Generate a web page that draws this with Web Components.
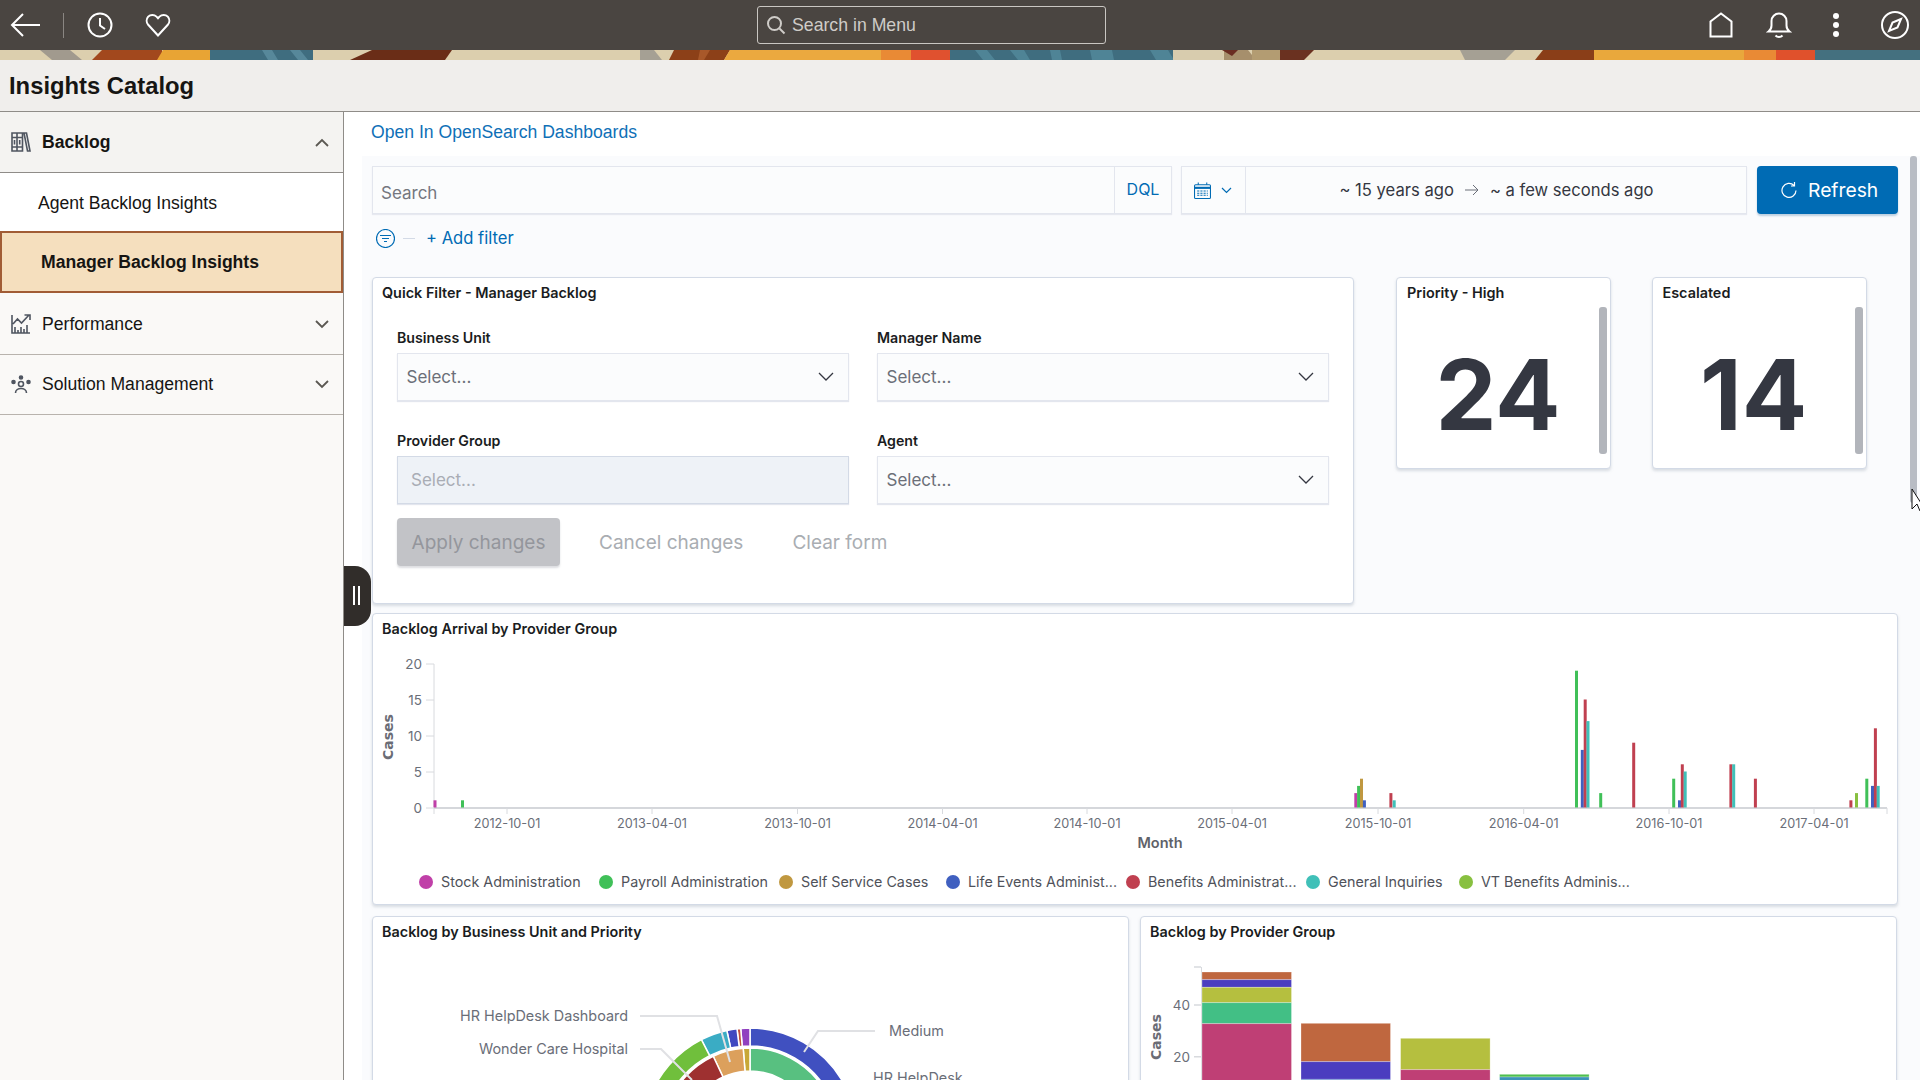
<!DOCTYPE html>
<html lang="en">
<head>
<meta charset="utf-8">
<title>Insights Catalog</title>
<style>
  html, body { margin: 0; height: 100%; overflow: hidden; background: #fff; }
  body { display: flex; flex-direction: column; width: 1920px; height: 1080px; font-family: "Liberation Sans", Arial, sans-serif; }
  .workspace { display: flex; flex: 1; min-height: 0; position: relative; }
</style>
</head>
<body>
<app-header></app-header>
<div class="workspace">
  <side-nav></side-nav>
  <collapse-handle></collapse-handle>
  <dash-view></dash-view>
</div>

<script>
// Barra superior + faixa decorada + título
class AppHeader extends HTMLElement {
  constructor() {
    super();
    this.attachShadow({ mode: "open" });
    this.shadowRoot.innerHTML = `
      <style>
        :host { display: block; flex: none; }
        .bar { height: 50px; background: #4a4541; display: flex; align-items: center; position: relative; }
        .left { display: flex; align-items: center; padding-left: 10px; }
        .sep { width: 1px; height: 25px; background: #8a8682; margin: 0 23px 0 21px; }
        .search {
          position: absolute; left: 757px; top: 6px; width: 349px; height: 38px; box-sizing: border-box;
          border: 1px solid #c9c6c2; border-radius: 3px; display: flex; align-items: center; padding-left: 8px; gap: 6px;
          color: #cfccc8; font: 17.7px "Liberation Sans", Arial, sans-serif;
        }
        .right { margin-left: auto; display: flex; align-items: center; }
        svg { display: block; fill: none; stroke: #fff; stroke-width: 2; }
        .banner { height: 10px; }
        .banner svg { stroke: none; }
        .title {
          height: 51px; background: #f0eeec; border-bottom: 1px solid #8f8c88;
          display: flex; align-items: center; padding-left: 9px;
          font: bold 23.8px "Liberation Sans", Arial, sans-serif; color: #161513;
        }
      </style>
      <div class="bar">
        <div class="left">
          <svg width="32" height="26" viewBox="0 0 32 26"><path d="M30 13H3M13 2 2 13l11 11"/></svg>
          <div class="sep"></div>
          <svg width="26" height="26" viewBox="0 0 26 26"><circle cx="13" cy="13" r="11.5"/><path d="M13 6v7.5l5 3.5"/></svg>
          <svg style="margin-left:32px" width="26" height="24" viewBox="0 0 26 24"><path d="M13 22.5 3.2 11.8a6.3 6.3 0 0 1 0-8.2 5.9 5.9 0 0 1 8.3 0L13 5.2l1.5-1.6a5.9 5.9 0 0 1 8.3 0 6.3 6.3 0 0 1 0 8.2z"/></svg>
        </div>
        <div class="search">
          <svg width="20" height="20" viewBox="0 0 20 20" style="stroke:#cfccc8"><circle cx="8.5" cy="8.5" r="6.5"/><path d="m13.5 13.5 5 5"/></svg>
          <span>Search in Menu</span>
        </div>
        <div class="right">
          <svg width="26" height="26" viewBox="0 0 26 26" style="margin-right:32px"><path d="M2.5 24.5V9.5L13 1.5l10.5 8v15z"/></svg>
          <svg width="26" height="28" viewBox="0 0 26 28" style="margin-right:40px"><path d="M2.5 20.5c2-1.5 3-3 3-6V10a7.5 7.5 0 0 1 15 0v4.5c0 3 1 4.5 3 6zM9.5 24.5c1.8 2 5.2 2 7 0"/></svg>
          <svg width="8" height="26" viewBox="0 0 8 26" style="margin-right:40px;stroke:none;fill:#fff"><circle cx="4" cy="4" r="3"/><circle cx="4" cy="13" r="3"/><circle cx="4" cy="22" r="3"/></svg>
          <svg width="30" height="30" viewBox="0 0 30 30" style="margin-right:10px"><circle cx="15" cy="15" r="13"/><path d="m21 9-8.5 3.5L9 21l8.5-3.5z"/></svg>
        </div>
      </div>
      <div class="banner">
        <svg width="1920" height="10" viewBox="0 0 1920 10" preserveAspectRatio="none">
          <rect width="1920" height="10" fill="#dccfae"/>
          <path d="M40 0h30l12 10H52z" fill="#a19a8e"/>
          <path d="M92 10l10-10h60v10z" fill="#a2481d"/>
          <path d="M157 10l6-10h47v10z" fill="#e8a434"/>
          <rect x="210" width="103" height="10" fill="#3f6d7f"/>
          <path d="M262 0h10l6 10h-10zM290 0h10l8 10h-10z" fill="#57889a"/>
          <path d="M372 0h80l-7 10h-95z" fill="#6a2d17"/>
          <path d="M640 0h14l8 10h-22z" fill="#a5a094"/>
          <path d="M669 10l5-10h56l-6 10z" fill="#8c4018"/>
          <path d="M700 0l10 0-6 10h-6z" fill="#a8582a"/>
          <path d="M724 10l6-10h151v10z" fill="#eba93f"/>
          <rect x="881" width="30" height="10" fill="#e98a35"/>
          <rect x="911" width="39" height="10" fill="#e0512f"/>
          <rect x="950" width="223" height="10" fill="#3f6d7f"/>
          <path d="M975 0h12l8 10h-12zM1010 0h14l6 10h-12zM1050 0h10l2 10h-10zM1090 0h22l2 10h-22zM1150 0h18l6 10h-18z" fill="#4f8496"/>
          <path d="M1173 0h50v10h-50z" fill="#d8ccae"/>
          <path d="M1224 0h24l8 10h-32z" fill="#a68f6c"/>
          <path d="M1222 0h16l-6 6z" fill="#6a2d22"/>
          <path d="M1252 0h28v10h-28z" fill="#b39c72"/>
          <path d="M1280 0h34l-10 10h-24z" fill="#6a3120"/>
          <path d="M1460 0h55l-10 10h-40z" fill="#a5a094"/>
          <path d="M1535 10l8-10h60v10z" fill="#8a3e18"/>
          <rect x="1594" width="150" height="10" fill="#e9a83c"/>
          <rect x="1744" width="32" height="10" fill="#e98a35"/>
          <rect x="1776" width="39" height="10" fill="#e0512c"/>
          <rect x="1815" width="105" height="10" fill="#44707f"/>
        </svg>
      </div>
      <div class="title">Insights Catalog</div>
    `;
  }
}

// Item do menu lateral
class NavItem extends HTMLElement {
  constructor() {
    super();
    this.attachShadow({ mode: "open" });
    this.shadowRoot.innerHTML = `
      <style>
        :host { display: flex; align-items: center; box-sizing: border-box; height: 60px; background: #faf9f7; border-bottom: 1px solid #b8b3ad; color: #161513; font: 17.6px "Liberation Sans", Arial, sans-serif; padding-left: 11px; }
        :host([kind="open"]) { background: #f4f3f1; border-bottom-color: #8f8c88; font-weight: bold; height: 61px; }
        :host([kind="sub"]) { background: #fff; height: 58px; border: 0; padding: 2px 0 0 38px; }
        :host([kind="current"]) { background: #f5dfbe; height: 62px; border: 2px solid #a15c35; padding: 1px 0 0 39px; font-weight: bold; }
        :host([kind="tall"]) { height: 62px; padding-top: 1px; }
        .icon { width: 20px; height: 20px; margin-right: 11px; }
        :host([kind="sub"]) .icon, :host([kind="current"]) .icon { display: none; }
        .chev { margin-left: auto; margin-right: 14px; }
        svg { display: block; fill: none; stroke-width: 1.8; }
      </style>
      <span class="icon"><slot name="icon"></slot></span>
      <slot></slot>
      <span class="chev"></span>
    `;
  }
  connectedCallback() {
    const kind = this.getAttribute("kind");
    const chev = this.shadowRoot.querySelector(".chev");
    if (kind === "open") chev.innerHTML = '<svg width="14" height="9" viewBox="0 0 14 9"><path d="m1 8 6-6 6 6" stroke="#5b5852"/></svg>';
    else if (kind === "closed" || kind === "tall") chev.innerHTML = '<svg width="14" height="9" viewBox="0 0 14 9"><path d="m1 1 6 6 6-6" stroke="#5b5852"/></svg>';
  }
}

class SideNav extends HTMLElement {
  constructor() {
    super();
    this.attachShadow({ mode: "open" });
    this.shadowRoot.innerHTML = `
      <style>
        :host { display: block; flex: none; box-sizing: border-box; width: 344px; background: #faf9f7; border-right: 1px solid #8f8c88; }
        svg { display: block; fill: none; stroke: #4f5560; stroke-width: 1.6; }
      </style>
      <nav-item kind="open">
        <svg slot="icon" width="20" height="20" viewBox="0 0 20 20"><path d="M1 1h5v18H1zM6 1h5.5v18H6zM1 5.500h10.500M1 15h10.500M3.500 8v4.500M8.700 8v4.500M13 1h2.500L19 19h-2.500z"/></svg>
        Backlog
      </nav-item>
      <nav-item kind="sub">Agent Backlog Insights</nav-item>
      <nav-item kind="current">Manager Backlog Insights</nav-item>
      <nav-item kind="tall">
        <svg slot="icon" width="20" height="20" viewBox="0 0 20 20"><path d="M1 1v18h18M4 19v-6M7 19v-3M10 19v-6M13 19v-4M16 19v-8M2 10l4.500-5 4 4 7.500-8M13.500 1H19v5"/></svg>
        Performance
      </nav-item>
      <nav-item kind="closed">
        <svg slot="icon" width="20" height="20" viewBox="0 0 20 20"><circle cx="10" cy="2.500" r="1.500" fill="#4f5560"/><circle cx="2.500" cy="7" r="1.500" fill="#4f5560"/><circle cx="17.500" cy="7" r="1.500" fill="#4f5560"/><circle cx="10" cy="9" r="2.500"/><path d="M4.500 18c0-6 11-6 11 0"/></svg>
        Solution Management
      </nav-item>
    `;
  }
}

class CollapseHandle extends HTMLElement {
  constructor() {
    super();
    this.attachShadow({ mode: "open" });
    this.shadowRoot.innerHTML = `
      <style>
        :host { position: absolute; left: 344px; top: 453.5px; width: 27px; height: 60px; background: #312d2a; border-radius: 0 16px 16px 0; z-index: 5; display: flex; align-items: center; justify-content: center; gap: 2.5px; padding-right: 2px; box-sizing: border-box; }
        i { display: block; width: 2.5px; height: 19px; background: #fff; }
      </style>
      <i></i><i></i>
    `;
  }
}

// Caixa de seleção do formulário
class SelectBox extends HTMLElement {
  constructor() {
    super();
    this.attachShadow({ mode: "open" });
    this.shadowRoot.innerHTML = `
      <style>
        :host { display: block; }
        .label { font: 600 14.2px Inter, sans-serif; color: #1a1c21; height: 20px; line-height: 20px; margin-bottom: 5px; }
        .box { height: 48px; box-sizing: border-box; background: #fbfcfd; border: 1px solid #e3e6ee; box-shadow: 0 1px 1px #e3e6ee; display: flex; align-items: center; padding: 0 8.5px; font: 17px Inter, sans-serif; color: #6b6f78; }
        :host([disabled]) .box { background: #eef2f7; border-color: #d3dae6; color: #a9adb5; padding-left: 13px; }
        :host([disabled]) svg { display: none; }
        svg { margin-left: auto; margin-right: 6px; fill: none; stroke: #343741; stroke-width: 1.3; }
      </style>
      <div class="label"><slot></slot></div>
      <div class="box">Select...<svg width="16" height="10" viewBox="0 0 16 10"><path d="m1 1 7 7 7-7"/></svg></div>
    `;
  }
}

// Painel branco do dashboard
class DashPanel extends HTMLElement {
  static get observedAttributes() { return ["heading"]; }
  constructor() {
    super();
    this.attachShadow({ mode: "open" });
    this.shadowRoot.innerHTML = `
      <style>
        :host { display: block; box-sizing: border-box; position: relative; background: #fff; border: 1px solid #d3dae6; border-radius: 4px; box-shadow: 0 2px 3px rgba(152,162,179,.35); overflow: hidden; }
        .head { font: 600 14.4px Inter, sans-serif; color: #1a1c21; padding: 5px 0 0 var(--head-pad, 9px); height: 20px; line-height: 20px; white-space: nowrap; }
      </style>
      <div class="head"></div>
      <slot></slot>
    `;
  }
  attributeChangedCallback(nome, antes, valor) {
    this.shadowRoot.querySelector(".head").textContent = valor;
  }
}

class MetricTile extends HTMLElement {
  constructor() {
    super();
    this.attachShadow({ mode: "open" });
    this.shadowRoot.innerHTML = `
      <style>
        :host { display: block; --head-pad: 10px; }
        dash-panel { height: 192px; }
        .num { display: flex; justify-content: center; align-items: center; height: 130px; margin-top: 26px; padding-right: 11px; font: 700 97px Inter, sans-serif; color: #343741; }
        .thumb { position: absolute; right: 3px; top: 29px; width: 8px; height: 147px; border-radius: 3px; background: #b2b5bb; }
      </style>
      <dash-panel><div class="num"></div><div class="thumb"></div></dash-panel>
    `;
  }
  connectedCallback() {
    this.shadowRoot.querySelector("dash-panel").setAttribute("heading", this.getAttribute("heading"));
    this.shadowRoot.querySelector(".num").textContent = this.getAttribute("value");
  }
}

// Gráfico de barras por data
const CORES = { stock: "#c040a8", payroll: "#40c058", self: "#c09840", life: "#4060c0", benefits: "#c04050", general: "#40c0b8", vt: "#88c040" };
const BARRAS = [
  [433.5,"stock",1],[461,"payroll",1],
  [1354.3,"stock",2],[1357.1,"payroll",3],[1360,"self",4],[1362.9,"life",1],[1389.4,"benefits",2],[1392.7,"general",1],
  [1575,"payroll",19],[1580.8,"life",8],[1583.7,"benefits",15],[1586.5,"general",12],[1599.2,"payroll",2],[1632.2,"benefits",9],
  [1672.2,"payroll",4],[1678,"life",1],[1680.8,"benefits",6],[1683.7,"general",5],[1729.4,"benefits",6],[1732.2,"general",6],[1753.9,"benefits",4],
  [1849.4,"benefits",1],[1855,"vt",2],[1865.3,"payroll",4],[1871,"life",3],[1873.9,"benefits",11],[1876.7,"general",3]
];
const DATAS = [[507,"2012-10-01"],[652,"2013-04-01"],[797.5,"2013-10-01"],[942.5,"2014-04-01"],[1087,"2014-10-01"],[1232,"2015-04-01"],[1378,"2015-10-01"],[1523.7,"2016-04-01"],[1669,"2016-10-01"],[1814,"2017-04-01"]];
const LEGENDA = [
  ["stock","Stock Administration",180],["payroll","Payroll Administration",180],["self","Self Service Cases",167],["life","Life Events Administ...",180],
  ["benefits","Benefits Administrat...",180],["general","General Inquiries",153],["vt","VT Benefits Adminis...",0]
];

class ArrivalChart extends HTMLElement {
  constructor() {
    super();
    this.attachShadow({ mode: "open" });
    // a origem do svg fica no canto do painel
    const ox = 373, oy = 614;
    const bars = BARRAS.map(([x, c, v]) => `<rect x="${x - ox}" y="${807.5 - oy - v * 7.2}" width="3" height="${v * 7.2}" fill="${CORES[c]}"/>`).join("");
    const yt = [0,5,10,15,20].map(v => {
      const y = 808 - oy - v * 7.2;
      return `<path d="M${426 - ox} ${y}H${434 - ox}" stroke="#d8dade"/><text x="${422 - ox}" y="${y + 5}" text-anchor="end">${v}</text>`;
    }).join("");
    const xt = DATAS.map(([x, d]) => `<path d="M${x - ox} ${808 - oy}v6" stroke="#d8dade"/><text class="data" x="${x - ox}" y="${828 - oy}" text-anchor="middle">${d}</text>`).join("");
    const leg = LEGENDA.map(([c, t, w]) => `<span class="it" style="width:${w ? w + "px" : "auto"}"><i style="background:${CORES[c]}"></i>${t}</span>`).join("");
    this.shadowRoot.innerHTML = `
      <style>
        :host { display: block; position: absolute; left: 0; top: 0; width: 100%; height: 100%; }
        svg { position: absolute; left: 0; top: 0; }
        text { font: 13.5px Inter, sans-serif; fill: #6a6e78; }
        text.data { font-size: 12.7px; }
        .axis { font: bold 14px "DejaVu Sans", sans-serif; fill: #6a6c75; }
        .xname { font: 600 14.5px Inter, sans-serif; fill: #5f6269; }
        .legend { position: absolute; left: 46px; top: 258.5px; display: flex; font: 14.3px Inter, sans-serif; color: #4f525a; white-space: nowrap; }
        .it { display: flex; align-items: center; gap: 8px; height: 18px; }
        .it i { width: 14px; height: 14px; border-radius: 50%; flex: none; }
      </style>
      <svg width="1525" height="290" viewBox="0 0 1525 290">
        <path d="M${434 - ox} ${664 - oy}V${808 - oy}" stroke="#d8dade"/>
        <path d="M${434 - ox} ${808 - oy}H${1887 - ox}" stroke="#d5d7db" stroke-width="2"/>
        <path d="M${434 - ox} ${808 - oy}v6M${1887 - ox} ${808 - oy}v6" stroke="#d8dade"/>
        ${bars}${yt}${xt}
        <text class="axis" transform="translate(20 ${737 - oy}) rotate(-90)" text-anchor="middle">Cases</text>
        <text class="xname" x="${1160 - ox}" y="${848 - oy}" text-anchor="middle">Month</text>
      </svg>
      <div class="legend">${leg}</div>
    `;
  }
}

// Fatia de anel em svg, ângulos em graus a partir do topo
function fatia(cx, cy, r0, r1, a0, a1, cor) {
  const p = (r, a) => { const t = (a - 90) * Math.PI / 180; return (cx + r * Math.cos(t)).toFixed(1) + " " + (cy + r * Math.sin(t)).toFixed(1); };
  const g = a1 - a0 > 180 ? 1 : 0;
  return `<path d="M${p(r1, a0)}A${r1} ${r1} 0 ${g} 1 ${p(r1, a1)}L${p(r0, a1)}A${r0} ${r0} 0 ${g} 0 ${p(r0, a0)}Z" fill="${cor}" stroke="#fff" stroke-width="1.5"/>`;
}

class DonutChart extends HTMLElement {
  constructor() {
    super();
    this.attachShadow({ mode: "open" });
    const ox = 373, oy = 917, cx = 750 - ox, cy = 1135 - oy;
    const fatias = [
      [89,107,0,120,"#4050c0"],[89,107,-5,0,"#9040c0"],[89,107,-7,-5,"#c05040"],[89,107,-12.5,-7,"#4048c0"],[89,107,-27,-12.5,"#3aacc4"],[89,107,-120,-27,"#70bf3c"],
      [64,87,0,120,"#58c080"],[64,87,-4.5,0,"#c8a838"],[64,87,-25,-4.5,"#dca05c"],[64,87,-120,-25,"#9e3030"]
    ].map(f => fatia(cx, cy, ...f)).join("");
    this.shadowRoot.innerHTML = `
      <style>
        :host { display: block; position: absolute; left: 0; top: 0; }
        text { font: 14.4px Inter, sans-serif; fill: #6a6e78; }
        path.l { fill: none; stroke: #e0e1e4; stroke-width: 2; }
      </style>
      <svg width="755" height="170" viewBox="0 0 755 170" style="display:block">
        ${fatias}
        <path class="l" d="M${640 - ox} ${1016 - oy}H${717 - ox}L${730 - ox} ${1062 - oy}"/>
        <path class="l" d="M${640 - ox} ${1049 - oy}H${661 - ox}L${692 - ox} ${1080 - oy}"/>
        <path class="l" d="M${875 - ox} ${1031 - oy}H${818 - ox}L${804 - ox} ${1052 - oy}"/>
        <text x="${628 - ox}" y="${1021 - oy}" text-anchor="end">HR HelpDesk Dashboard</text>
        <text x="${628 - ox}" y="${1054 - oy}" text-anchor="end">Wonder Care Hospital</text>
        <text x="${889 - ox}" y="${1036 - oy}">Medium</text>
        <text x="${873 - ox}" y="${1083 - oy}">HR HelpDesk</text>
      </svg>
    `;
  }
}

class StackChart extends HTMLElement {
  constructor() {
    super();
    this.attachShadow({ mode: "open" });
    const ox = 1141, oy = 917;
    // [x, camadas [topo, base, cor]]
    const col = [
      [1202, [[972,979.7,"#bf673f"],[979.7,987.3,"#4b3dbf"],[987.3,1002.7,"#b5bf3f"],[1002.7,1023.7,"#42bf85"],[1023.7,1100,"#bf3f75"]]],
      [1301, [[1023.3,1061.7,"#bf673f"],[1061.7,1079.3,"#4b3dbf"],[1079.3,1100,"#3f6fbf"]]],
      [1400.6, [[1038.3,1069.7,"#b5bf3f"],[1069.7,1100,"#bf3f75"]]],
      [1499.6, [[1074.3,1077,"#4fbf4f"],[1077,1100,"#3d94b8"]]]
    ];
    const rects = col.map(([x, cam]) => cam.map(([t, b, c]) => `<rect x="${x - ox}" y="${t - oy}" width="89.5" height="${b - t}" fill="${c}" stroke="#fff" stroke-opacity=".35" stroke-width=".8"/>`).join("")).join("");
    this.shadowRoot.innerHTML = `
      <style>
        :host { display: block; position: absolute; left: 0; top: 0; }
        text { font: 13.5px Inter, sans-serif; fill: #6a6e78; }
        .axis { font: bold 14px "DejaVu Sans", sans-serif; fill: #6a6c75; }
      </style>
      <svg width="755" height="170" viewBox="0 0 755 170" style="display:block">
        <path d="M${1201.5 - ox} ${967 - oy}V170" stroke="#d8dade"/>
        <path d="M${1194 - ox} ${967 - oy}h7M${1194 - ox} ${1005 - oy}h7M${1194 - ox} ${1056.7 - oy}h7" stroke="#d8dade" stroke-width="1.5"/>
        ${rects}
        <text x="${1190 - ox}" y="${1010 - oy}" text-anchor="end">40</text>
        <text x="${1190 - ox}" y="${1062 - oy}" text-anchor="end">20</text>
        <text class="axis" transform="translate(${1161 - ox} ${1037 - oy}) rotate(-90)" text-anchor="middle">Cases</text>
      </svg>
    `;
  }
}

// Barra de busca estilo OpenSearch
class QueryBar extends HTMLElement {
  constructor() {
    super();
    this.attachShadow({ mode: "open" });
    this.shadowRoot.innerHTML = `
      <style>
        :host { display: flex; height: 48px; font: 16.6px Inter, sans-serif; color: #343741; }
        .f { box-sizing: border-box; height: 48px; background: #fbfcfd; border: 1px solid #e3e6ee; box-shadow: 0 1px 1px #e7e9f0; display: flex; align-items: center; }
        .q { width: 800px; }
        .q span:first-child { flex: 1; padding-left: 8px; color: #74777f; padding-top: 6px; font-size: 17px; }
        .dql { border-left: 1px solid #e3e6ee; align-self: stretch; width: 56px; display: flex; align-items: center; justify-content: center; color: #006bb4; font-size: 16px; padding-bottom: 2px; }
        .d { width: 566px; margin-left: 9px; }
        .cal { width: 64px; align-self: stretch; border-right: 1px solid #e3e6ee; display: flex; align-items: center; gap: 10px; padding-left: 12px; box-sizing: border-box; }
        .range { flex: 1; display: flex; align-items: center; justify-content: center; gap: 11px; padding-left: 1px; white-space: nowrap; }
        button { all: unset; box-sizing: border-box; width: 141px; height: 48px; margin-left: 10px; background: #006bb4; border-radius: 4px; color: #fff; font: 400 19.3px Inter, sans-serif; display: flex; align-items: center; gap: 11px; padding-left: 24px; box-shadow: 0 2px 2px rgba(0,80,140,.25); }
      </style>
      <div class="f q"><span>Search</span><span class="dql">DQL</span></div>
      <div class="f d">
        <div class="cal">
          <svg width="17" height="17" viewBox="0 0 16 16" fill="none" stroke="#006bb4"><rect x=".5" y="2.5" width="15" height="13" rx="1"/><path d="M.5 5.500h15" stroke-width="2"/><path d="M3 8.500h10M3 10.500h10M3 12.500h10" stroke-dasharray="2 1"/><path d="M4 .5v2M12 .5v2"/></svg>
          <svg width="11" height="7" viewBox="0 0 11 7" fill="none" stroke="#006bb4" stroke-width="1.2"><path d="m1 1 4.500 4.500L10 1"/></svg>
        </div>
        <div class="range"><span>~ 15 years ago</span>
          <svg width="14" height="12" viewBox="0 0 14 12" fill="none" stroke="#6a6e78"><path d="M0 6h13M8 1l5 5-5 5"/></svg>
          <span>~ a few seconds ago</span></div>
      </div>
      <button>
        <svg width="16" height="18" viewBox="0 0 16 18" fill="none" stroke="#fff" stroke-width="1.2"><path d="M13 4.500a7 7 0 1 0 2 5M13.500 1v4H10"/></svg>
        <span>Refresh</span>
      </button>
    `;
  }
}

class FilterRow extends HTMLElement {
  constructor() {
    super();
    this.attachShadow({ mode: "open" });
    this.shadowRoot.innerHTML = `
      <style>
        :host { display: flex; align-items: center; height: 24px; padding-left: 4px; font: 16.6px Inter, sans-serif; color: #006bb4; }
        i { display: block; width: 12px; height: 1px; background: #d3dae6; margin: 0 11px 0 8px; }
      </style>
      <svg width="19" height="19" viewBox="0 0 19 19" fill="none" stroke="#006bb4" stroke-width="1.2"><circle cx="9.5" cy="9.5" r="9"/><path d="M4 6.500h11M6 9.500h7M8 12.500h3"/></svg>
      <i></i><span>+ Add filter</span>
    `;
  }
}

class QuickFilter extends HTMLElement {
  constructor() {
    super();
    this.attachShadow({ mode: "open" });
    this.shadowRoot.innerHTML = `
      <style>
        :host { display: block; }
        dash-panel { height: 327px; }
        .form { display: grid; grid-template-columns: 452px 452px; column-gap: 28px; row-gap: 30px; padding: 25px 0 0 24px; }
        .acts { display: flex; align-items: center; margin: 14px 0 0 24px; font: 19px Inter, sans-serif; color: #a9adb2; gap: 39px; }
        .apply { box-sizing: border-box; width: 163px; height: 48px; background: #c2c3c7; color: #94969c; border-radius: 4px; display: flex; align-items: center; justify-content: center; box-shadow: 0 2px 2px rgba(120,125,135,.25); }
        .acts span:last-child { margin-left: 10px; }
      </style>
      <dash-panel heading="Quick Filter - Manager Backlog">
        <div class="form">
          <select-box>Business Unit</select-box>
          <select-box>Manager Name</select-box>
          <select-box disabled>Provider Group</select-box>
          <select-box>Agent</select-box>
        </div>
        <div class="acts">
          <span class="apply">Apply changes</span><span>Cancel changes</span><span>Clear form</span>
        </div>
      </dash-panel>
    `;
  }
}

class DashView extends HTMLElement {
  constructor() {
    super();
    this.attachShadow({ mode: "open" });
    this.shadowRoot.innerHTML = `
      <style>
        :host { display: block; flex: 1; min-width: 0; position: relative; overflow: hidden; background: #fff; }
        .link { height: 44px; box-sizing: border-box; padding: 8px 0 0 27px; font: 17.6px/24px "Liberation Sans", Arial, sans-serif; color: #0f70b7; }
        .canvas { margin-left: 18px; background: #fafbfd; padding: 10px 22px 0 10px; height: 925px; box-sizing: border-box; }
        filter-row { margin-top: 12px; }
        .top { display: grid; grid-template-columns: 982px 215px 214px; column-gap: 42px; margin-top: 27px; align-items: start; }
        .top metric-tile:last-child { margin-left: -1.5px; }
        .wide { height: 292px; margin-top: 9px; }
        .two { display: grid; grid-template-columns: 757px 757px; column-gap: 11px; margin-top: 11px; }
        .two dash-panel { height: 200px; }
        .rail { position: absolute; right: 3px; top: 44px; width: 7px; height: 347px; background: #b8bcc4; border-radius: 3px; }
        .mouse { position: absolute; left: 1567px; top: 376px; z-index: 3; }
      </style>
      <div class="link">Open In OpenSearch Dashboards</div>
      <div class="canvas">
        <query-bar></query-bar>
        <filter-row></filter-row>
        <div class="top">
          <quick-filter></quick-filter>
          <metric-tile heading="Priority - High" value="24"></metric-tile>
          <metric-tile heading="Escalated" value="14"></metric-tile>
        </div>
        <dash-panel class="wide" heading="Backlog Arrival by Provider Group"><arrival-chart></arrival-chart></dash-panel>
        <div class="two">
          <dash-panel heading="Backlog by Business Unit and Priority"><donut-chart></donut-chart></dash-panel>
          <dash-panel heading="Backlog by Provider Group"><stack-chart></stack-chart></dash-panel>
        </div>
      </div>
      <div class="rail"></div>
      <svg class="mouse" width="10" height="24" viewBox="0 0 10 24"><path d="M1 1v20l5-5 3 7 1-1v-7z" fill="#fff" stroke="#111" stroke-width="1"/></svg>
    `;
  }
}

customElements.define("app-header", AppHeader);
customElements.define("nav-item", NavItem);
customElements.define("side-nav", SideNav);
customElements.define("collapse-handle", CollapseHandle);
customElements.define("select-box", SelectBox);
customElements.define("dash-panel", DashPanel);
customElements.define("metric-tile", MetricTile);
customElements.define("arrival-chart", ArrivalChart);
customElements.define("donut-chart", DonutChart);
customElements.define("stack-chart", StackChart);
customElements.define("query-bar", QueryBar);
customElements.define("filter-row", FilterRow);
customElements.define("quick-filter", QuickFilter);
customElements.define("dash-view", DashView);
</script>
</body>
</html>
